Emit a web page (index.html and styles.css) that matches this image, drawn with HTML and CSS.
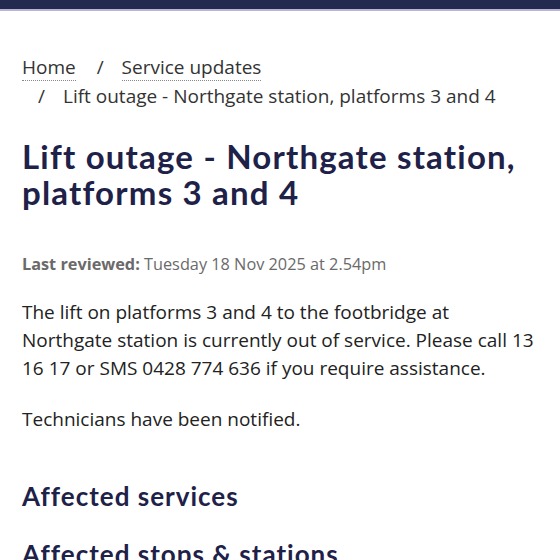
FILE: index.html
```html
<!DOCTYPE html>
<html lang="en">
<head>
<meta charset="utf-8">
<title>Lift outage - Northgate station, platforms 3 and 4</title>
<link rel="stylesheet" href="styles.css">
</head>
<body>
<header class="topbar"></header>
<main class="page">
  <nav class="breadcrumb">
    <ol class="crumbs">
      <li class="crumb"><a class="crumb-link" href="#">Home</a></li>
      <li class="crumb"><span class="sep">/</span><a class="crumb-link" href="#">Service updates</a></li>
      <li class="crumb"><span class="sep">/</span><span class="crumb-current">Lift outage - Northgate station, platforms 3 and 4</span></li>
    </ol>
  </nav>
  <h1 class="title">Lift outage - Northgate station, platforms 3 and 4</h1>
  <p class="reviewed"><strong>Last reviewed:</strong> Tuesday 18 Nov 2025 at 2.54pm</p>
  <div class="body-text">
    <p>The lift on platforms 3 and 4 to the footbridge at Northgate station is currently out of service. Please call 13 16 17 or SMS 0428 774 636 if you require assistance.</p>
    <p>Technicians have been notified.</p>
  </div>
  <h2 class="section-title first">Affected services</h2>
  <h2 class="section-title">Affected stops &amp; stations</h2>
</main>
</body>
</html>
```
FILE: styles.css
```css
html, body {
  margin: 0;
  padding: 0;
  background: #ffffff;
}
body {
  font-family: "Open Sans", "Noto Sans", sans-serif;
  color: #222222;
}
.topbar {
  height: 9px;
  background: #232a50;
  border-bottom: 2px solid #b9b5d4;
}
.page {
  padding: 42px 22px 0 22px;
}
.breadcrumb {
  font-size: 19px;
  line-height: 29px;
  color: #333333;
}
.crumbs {
  list-style: none;
  margin: 0;
  padding: 0;
}
.crumb {
  display: inline-block;
  white-space: nowrap;
}
.sep {
  display: inline-block;
  margin: 0 18px 0 16px;
}
.crumb-link {
  color: #333333;
  text-decoration: none;
  border-bottom: 1px dotted #888888;
}
.title {
  font-family: "Lato", "Noto Sans", sans-serif;
  font-weight: 700;
  font-size: 33px;
  line-height: 36px;
  letter-spacing: 1.2px;
  color: #1e2148;
  margin: 27px 0 0 0;
}
.reviewed {
  font-size: 16.3px;
  line-height: 24px;
  color: #6a6a6a;
  margin: 42px 0 0 0;
}
.reviewed strong {
  font-weight: 700;
}
.body-text {
  margin-top: 22px;
}
.body-text p {
  font-size: 19px;
  line-height: 28px;
  margin: 0 0 23px 0;
}
.section-title {
  font-family: "Lato", "Noto Sans", sans-serif;
  font-weight: 700;
  font-size: 26px;
  line-height: 32px;
  letter-spacing: 1px;
  color: #1e2148;
  margin: 0;
}
.section-title.first {
  margin-top: 47px;
}
.section-title + .section-title {
  margin-top: 26px;
}
```
